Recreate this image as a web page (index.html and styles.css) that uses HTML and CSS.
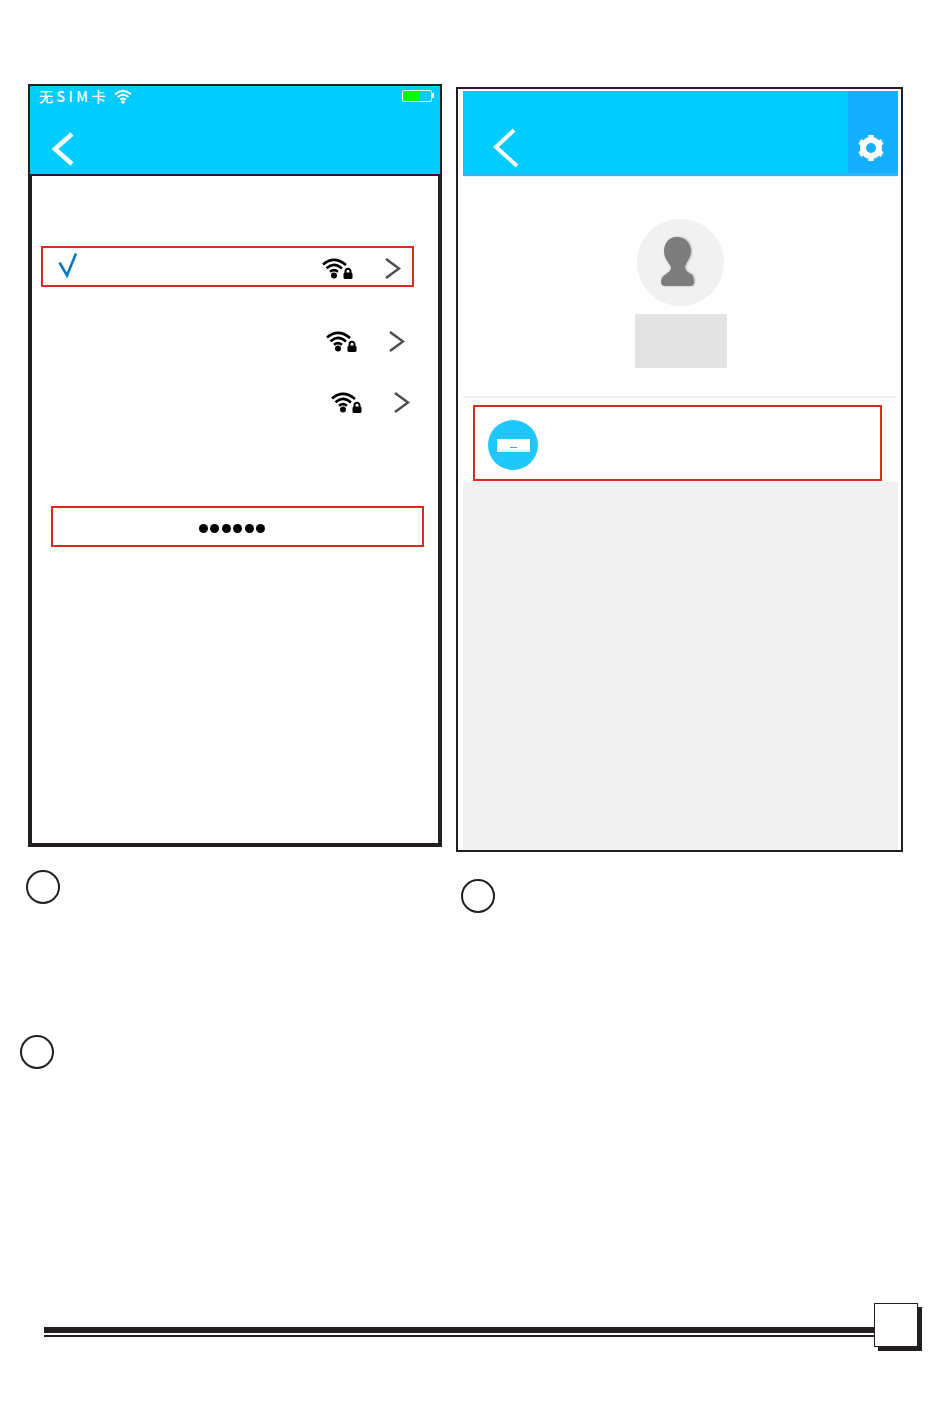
FILE: index.html
```html
<!DOCTYPE html>
<html lang="en">
<head>
  <meta charset="UTF-8" />
  <meta name="viewport" content="width=device-width, initial-scale=1.0" />
  <title>Network setup</title>
  <link rel="stylesheet" href="styles.css">
</head>
<body>
  <div class="columns">
    <div class="col-left">
      <div class="phone-left">
        <div class="blue-head">
          <div class="status">
            <span class="carrier">无SIM卡</span>
            <svg class="status-wifi" width="18" height="15" viewBox="0 0 18 15">
              <g fill="none" stroke="#fff" stroke-width="2">
                <path d="M1 5.2Q9 -1.5 17 5.2"/>
                <path d="M3.6 8Q9 3.4 14.4 8"/>
                <path d="M6.2 10.6Q9 8.4 11.8 10.6"/>
              </g>
              <circle cx="9" cy="13" r="1.8" fill="#fff"/>
            </svg>
            <div class="battery"><div class="battery-fill"></div></div>
          </div>
          <svg class="back-left" width="24" height="34" viewBox="0 0 24 34">
            <path d="M21 2L4 17L21 32" fill="none" stroke="#fff" stroke-width="4.5"/>
          </svg>
        </div>
        <div class="wifi-list">
          <div class="wifi-row selected">
            <svg class="check" width="20" height="25" viewBox="0 0 20 25">
              <path d="M1.5 9.5L9 22.5L18 0.5" fill="none" stroke="#0a79c0" stroke-width="2.6"/>
            </svg>
            <svg class="wifi" width="31" height="21" viewBox="0 0 31 21"><use href="#wifi-lock"/></svg>
            <svg class="chevron" width="16" height="21" viewBox="0 0 16 21"><use href="#chev"/></svg>
          </div>
          <div class="wifi-row second">
            <svg class="wifi" width="31" height="21" viewBox="0 0 31 21"><use href="#wifi-lock"/></svg>
            <svg class="chevron" width="16" height="21" viewBox="0 0 16 21"><use href="#chev"/></svg>
          </div>
          <div class="wifi-row third">
            <svg class="wifi" width="31" height="21" viewBox="0 0 31 21"><use href="#wifi-lock"/></svg>
            <svg class="chevron" width="16" height="21" viewBox="0 0 16 21"><use href="#chev"/></svg>
          </div>
          <div class="password">
            <span class="dot"></span><span class="dot"></span><span class="dot"></span>
            <span class="dot"></span><span class="dot"></span><span class="dot"></span>
          </div>
        </div>
      </div>
      <div class="step step-one"></div>
      <div class="step step-two"></div>
    </div>

    <div class="col-right">
      <div class="phone-right">
        <div class="blue-bar">
          <svg class="back-right" width="28" height="40" viewBox="0 0 28 40">
            <path d="M22 2L4 19L25 38" fill="none" stroke="#fff" stroke-width="4"/>
          </svg>
          <div class="gear-box">
            <svg width="28" height="28" viewBox="0 0 28 28">
              <circle cx="14" cy="14" r="8" fill="none" stroke="#fff" stroke-width="6"/>
              <g stroke="#fff" stroke-width="5.5">
                <path d="M14 1V27"/>
                <path d="M2.8 7.5L25.2 20.5"/>
                <path d="M2.8 20.5L25.2 7.5"/>
              </g>
              <circle cx="14" cy="14" r="5" fill="#14b0ff"/>
            </svg>
          </div>
        </div>
        <div class="profile">
          <div class="avatar">
            <svg width="38" height="52" viewBox="0 0 38 52">
              <path d="M18 2C26 2 32 8 32 16C32 23 27 27 26 32C26 35 28 37 32 39C34 40 35 43 35 47Q35 51 31 51H6Q2 51 2 47C2 43 4 41 7 39C10 37 12 35 12 32C10 28 5 24 5 16C5 8 10 2 18 2Z" fill="#7d7d7d"/>
            </svg>
          </div>
          <div class="name-block"></div>
        </div>
        <div class="device-section">
          <div class="device-row">
            <div class="device-icon"><div class="device-unit"></div></div>
          </div>
        </div>
        <div class="empty-area"></div>
      </div>
      <div class="step step-three"></div>
    </div>
  </div>

  <footer>
    <div class="rules"></div>
    <div class="page-box"></div>
  </footer>

  <!-- shared icons -->
  <svg class="defs" width="0" height="0">
    <defs>
      <g id="wifi-lock">
        <g fill="none" stroke="#000" stroke-width="2.6">
          <path d="M1 6.5Q12 -3 24 7"/>
          <path d="M4.5 10.2Q12 3.5 20 10.5"/>
          <path d="M8 13.8Q12 10.5 16 13.8"/>
        </g>
        <circle cx="12" cy="17.5" r="3" fill="#000"/>
        <rect x="21.5" y="14.5" width="9" height="6.5" rx="1.5" fill="#000"/>
        <path d="M23.5 15V13.2a2.5 2.5 0 0 1 5 0V15" fill="none" stroke="#000" stroke-width="2"/>
      </g>
      <path id="chev" d="M1 1L14 10.5L1 20" fill="none" stroke="#4d4d4d" stroke-width="2.5"/>
    </defs>
  </svg>
</body>
</html>
```

FILE: styles.css
```css
body {
  margin: 0;
  background-color: #fff;
  font-family: "Liberation Sans", "Noto Sans CJK SC", sans-serif;
}

.columns {
  display: flex;
  align-items: flex-start;
  padding: 84px 0 0 20px;
  gap: 14px;
  height: 1303px;
  box-sizing: border-box;
}

.col-left {
  width: 422px;
}

.col-right {
  width: 447px;
  padding-top: 3px;
}

/* left phone */
.phone-left {
  margin-left: 8px;
  width: 414px;
  height: 763px;
  box-sizing: border-box;
  border: 4px solid #231f20;
  border-top-width: 2px;
  display: flex;
  flex-direction: column;
}

.blue-head {
  margin: 0 -2px;
  height: 90px;
  box-sizing: border-box;
  background: #00ccff;
  border-bottom: 2px solid #231f20;
}

.status {
  display: flex;
  align-items: center;
  height: 22px;
  padding: 0 8px 2px 9px;
  box-sizing: border-box;
}

.carrier {
  color: #fff;
  font-family: "Noto Sans CJK SC", sans-serif;
  font-size: 14px;
  font-weight: 500;
  line-height: 20px;
  letter-spacing: 3.5px;
  width: 75px;
  white-space: nowrap;
}

.battery {
  margin-left: auto;
  width: 30px;
  height: 12px;
  box-sizing: border-box;
  border: 1.5px solid #eefcff;
  border-radius: 2px;
  position: relative;
}

.battery:after {
  content: "";
  position: absolute;
  left: 28px;
  top: 2px;
  width: 3px;
  height: 5px;
  background: #eefcff;
}

.battery-fill {
  width: 16px;
  height: 100%;
  background: #00ff00;
}

.back-left {
  display: block;
  margin: 24px 0 0 21px;
}

.wifi-list {
  flex: 1;
}

.wifi-row {
  display: flex;
  align-items: center;
  width: 373px;
  height: 41px;
  box-sizing: border-box;
  padding: 0 11px 0 15px;
  border: 2px solid transparent;
}

.wifi-row.selected {
  margin: 70px 0 0 9px;
  border-color: #dd2a1f;
}

.wifi-row.second {
  margin: 32px 0 0 13px;
}

.wifi-row.third {
  margin: 20px 0 0 18px;
}

.check {
  margin-top: -2px;
}

.wifi {
  margin-left: auto;
  margin-top: 4px;
}

.chevron {
  margin-left: 32px;
  margin-top: 3px;
}

.password {
  margin: 85px 0 0 19px;
  width: 373px;
  height: 41px;
  box-sizing: border-box;
  border: 2px solid #dd2a1f;
  padding: 3px 11px 0 0;
  display: flex;
  align-items: center;
  justify-content: center;
  gap: 2.6px;
}

.dot {
  width: 9px;
  height: 9px;
  border-radius: 50%;
  background: #000;
}

/* step markers */
.step {
  width: 34px;
  height: 34px;
  box-sizing: border-box;
  border: 2px solid #231f20;
  border-radius: 50%;
}

.step-one {
  margin: 23px 0 0 6px;
}

.step-two {
  margin-top: 131px;
}

.step-three {
  margin: 27px 0 0 5px;
}

/* right phone */
.phone-right {
  height: 765px;
  box-sizing: border-box;
  border: 2px solid #231f20;
  padding: 2px 3px 0 5px;
  display: flex;
  flex-direction: column;
}

.blue-bar {
  display: flex;
  height: 85px;
  flex-shrink: 0;
  box-sizing: border-box;
  background: #00ccff;
  border-bottom: 3px solid #2eb4f2;
  box-shadow: 0 1px 0 #dcf8ff;
}

.back-right {
  margin: 37px 0 0 29px;
}

.gear-box {
  margin-left: auto;
  width: 50px;
  background: #14b0ff;
  display: flex;
  align-items: center;
  justify-content: center;
  padding: 31px 5px 0 0;
  box-sizing: border-box;
}

.profile {
  height: 222px;
  box-sizing: border-box;
  padding: 43px 0 0 2px;
  display: flex;
  flex-direction: column;
  align-items: center;
  border-bottom: 2px solid #eeeeee;
  flex-shrink: 0;
  margin-right: 2px;
}

.avatar {
  width: 87px;
  height: 87px;
  border-radius: 50%;
  background: #f1f1f1;
  display: flex;
  align-items: center;
  justify-content: center;
}

.avatar svg {
  margin: -3px 0 0 -6px;
  filter: drop-shadow(1px 0 1px #b5b5b5);
}

.name-block {
  margin-top: 8px;
  width: 92px;
  height: 54px;
  background: #e3e3e3;
}

.device-section {
  height: 84px;
  box-sizing: border-box;
  padding: 7px 0 0 10px;
  flex-shrink: 0;
}

.device-row {
  width: 409px;
  height: 76px;
  box-sizing: border-box;
  border: 2px solid #dd2a1f;
  padding: 13px 0 0 13px;
}

.device-icon {
  width: 50px;
  height: 50px;
  border-radius: 50%;
  background: #1ec8ff;
  display: flex;
  align-items: center;
  justify-content: center;
}

.device-unit {
  width: 33px;
  height: 13px;
  background: linear-gradient(#fff 70%, #c8f1ff);
  position: relative;
}

.device-unit:after {
  content: "";
  position: absolute;
  left: 13px;
  top: 8px;
  width: 7px;
  height: 1px;
  background: #4aa8d0;
}

.empty-area {
  flex: 1;
  background: #f1f1f1;
}

/* page number footer */
footer {
  display: flex;
  align-items: flex-start;
  margin-left: 44px;
  width: 874px;
  padding-bottom: 72px;
}

.rules {
  flex: 1;
  height: 10px;
  margin-top: 24px;
  box-sizing: border-box;
  border-top: 6px solid #231f20;
  border-bottom: 2px solid #231f20;
}

.page-box {
  width: 44px;
  height: 44px;
  box-sizing: border-box;
  background: #fff;
  border: 1px solid #231f20;
  box-shadow: 4px 4px 0 #231f20;
}

.defs {
  position: absolute;
}
```
